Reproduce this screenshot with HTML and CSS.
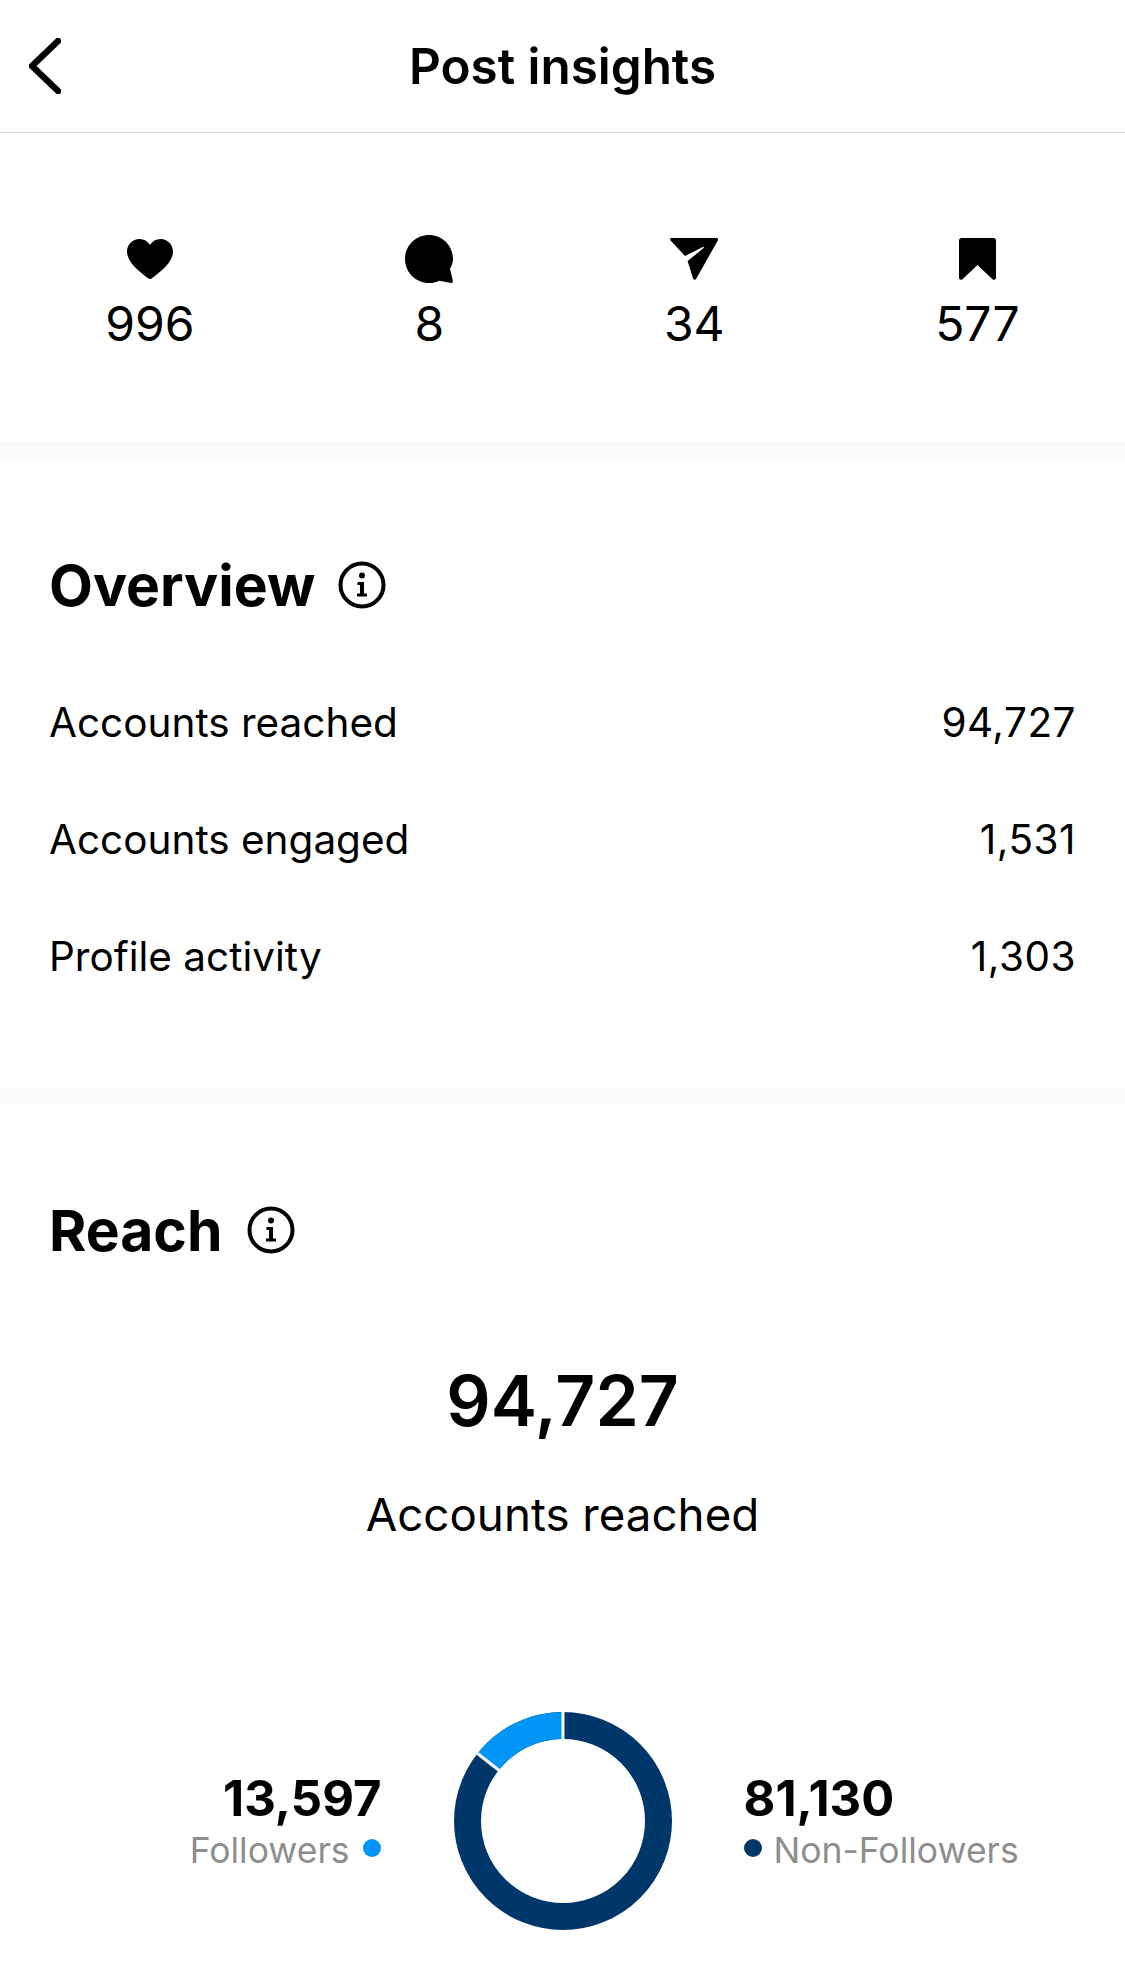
FILE: index.html
```html
<!DOCTYPE html>
<html>
<head>
  <meta charset="utf-8">
  <title>Post insights</title>
  <link rel="stylesheet" href="styles.css">
</head>
<body>

<div class="topbar">
  <svg class="back" width="32" height="56" viewBox="0 0 32 56"><path d="M29 3 L3 28 L29 53" /></svg>
  <div class="title">Post insights</div>
</div>

<div class="stats">
  <div class="stat">
    <div class="icon"><svg width="46" height="40" viewBox="0 0 46 40"><path d="M33.500 0C28.900 0 25.500 2.300 23 5.800 20.500 2.300 17.100 0 12.500 0 5.400 0 0 5.700 0 12.600 0 22.700 10.500 31 21 39.300c1.200 .9 2.800 .9 4 0C35.500 31 46 22.700 46 12.600 46 5.700 40.600 0 33.500 0Z"/></svg></div>
    <span>996</span>
  </div>
  <div class="stat">
    <div class="icon"><svg width="48" height="48" viewBox="0 0 48 48"><path d="M24 0C10.700 0 0 10.700 0 24s10.700 24 24 24c3.700 0 7.200 -.8 10.300 -2.300l11.800 2.200c1.200 .2 2.100 -.8 1.800 -2l-2.900 -12.100C46.900 30.700 48 27.500 48 24 48 10.700 37.300 0 24 0Z"/></svg></div>
    <span>8</span>
  </div>
  <div class="stat">
    <div class="icon"><svg width="48" height="42" viewBox="0 0 48 42"><path fill-rule="evenodd" d="M1.500 0H46.500C47.800 0 48.400 1.300 47.800 2.400L26.200 40.800C25.400 42.300 23.400 42 23 40.300L17.600 23 34 9.800 33.300 8.700 15 18 .6 2.600C-.4 1.500 .2 0 1.500 0Z"/></svg></div>
    <span>34</span>
  </div>
  <div class="stat">
    <div class="icon"><svg width="37" height="42" viewBox="0 0 37 42"><path d="M2.500 0H34.500C35.900 0 37 1.100 37 2.500V39.500C37 41.500 35 42.400 33.500 41.200L18.500 27 3.500 41.200C2 42.400 0 41.500 0 39.500V2.500C0 1.100 1.100 0 2.500 0Z"/></svg></div>
    <span>577</span>
  </div>
</div>

<div class="overview">
  <div class="heading">
    <h2>Overview</h2>
    <svg class="info" width="48" height="48" viewBox="0 0 48 48">
      <circle cx="24" cy="24" r="21.500" fill="none" stroke="#000" stroke-width="4"/>
      <circle cx="24" cy="14.500" r="3"/>
      <path d="M19.500 21H26V32.500H29V35.500H19V32.500H22V24H19.500Z"/>
    </svg>
  </div>
  <div class="row"><span>Accounts reached</span><span class="value">94,727</span></div>
  <div class="row"><span>Accounts engaged</span><span class="value">1,531</span></div>
  <div class="row"><span>Profile activity</span><span class="value">1,303</span></div>
</div>

<div class="reach">
  <div class="heading">
    <h2>Reach</h2>
    <svg class="info" width="48" height="48" viewBox="0 0 48 48">
      <circle cx="24" cy="24" r="21.500" fill="none" stroke="#000" stroke-width="4"/>
      <circle cx="24" cy="14.500" r="3"/>
      <path d="M19.500 21H26V32.500H29V35.500H19V32.500H22V24H19.500Z"/>
    </svg>
  </div>

  <div class="total">94,727</div>
  <div class="total-label">Accounts reached</div>

  <div class="split">
    <div class="side left">
      <div class="num">13,597</div>
      <div class="legend">Followers <i class="dot light"></i></div>
    </div>
    <svg class="donut" width="218" height="218" viewBox="0 0 218 218">
      <circle cx="109" cy="109" r="95.500" fill="none" stroke="#00376b" stroke-width="27"/>
      <circle cx="109" cy="109" r="95.500" fill="none" stroke="#0095f6" stroke-width="27" pathLength="100" stroke-dasharray="14.350 85.650" transform="rotate(-141.700 109 109)"/>
      <path d="M109 -1V29" stroke="#fff" stroke-width="3"/>
      <path d="M23.500 41.500 L46.500 59.500" stroke="#fff" stroke-width="3"/>
    </svg>
    <div class="side right">
      <div class="num">81,130</div>
      <div class="legend"><i class="dot dark"></i> Non-Followers</div>
    </div>
  </div>
</div>

</body>
</html>
```

FILE: styles.css
```css
body {
  margin: 0;
  background: #fff;
  color: #000;
  font-family: "Inter", "Liberation Sans", sans-serif;
}

.topbar {
  height: 132px;
  border-bottom: 1px solid #dbdbdb;
  display: flex;
  align-items: center;
  justify-content: center;
  position: relative;
}

.back {
  position: absolute;
  left: 29px;
  top: 38px;
}

.back path {
  fill: none;
  stroke: #000;
  stroke-width: 6.500;
  stroke-linecap: round;
  stroke-linejoin: round;
}

.title {
  font-size: 49.400px;
  font-weight: 600;
}

.stats {
  height: 327px;
  box-sizing: border-box;
  padding-top: 102px;
  display: flex;
  justify-content: space-around;
  border-bottom: 18px solid #fafafa;
}

.stat {
  display: flex;
  flex-direction: column;
  align-items: center;
  gap: 17px;
  font-size: 48px;
  line-height: 48px;
}

.icon {
  height: 48px;
  display: flex;
  align-items: center;
}

.overview {
  padding: 93px 49px 106px;
  border-bottom: 18px solid #fafafa;
}

.reach {
  padding: 93px 49px 0;
}

.heading {
  display: flex;
  align-items: center;
  gap: 23px;
  height: 64px;
}

.reach .heading {
  gap: 25px;
}

.heading h2 {
  margin: 0;
  font-size: 57px;
  font-weight: 700;
}

.row {
  display: flex;
  justify-content: space-between;
  font-size: 40.500px;
  line-height: 48px;
  margin-top: 69px;
}

.heading + .row {
  margin-top: 82px;
}

.value {
  letter-spacing: 0.500px;
}

.total {
  margin-top: 97px;
  text-align: center;
  font-size: 69.500px;
  line-height: 84px;
  font-weight: 600;
}

.total-label {
  margin-top: 44px;
  text-align: center;
  font-size: 45.700px;
  line-height: 56px;
}

.split {
  margin: 169px -49px 0;
  display: grid;
  grid-template-columns: 1fr 218px 1fr;
  column-gap: 72px;
  align-items: center;
}

.side {
  padding-top: 4px;
}

.side.left {
  text-align: right;
}

.num {
  font-size: 49px;
  line-height: 52px;
  font-weight: 700;
}

.legend {
  margin-top: 4px;
  font-size: 35.500px;
  line-height: 44px;
  color: #8e8e8e;
}

.left .legend {
  padding-right: 1px;
}

.dot {
  display: inline-block;
  width: 18px;
  height: 18px;
  border-radius: 50%;
  vertical-align: 6px;
}

.left .dot {
  margin-left: 3px;
}

.right .dot {
  margin-right: 2px;
}

.light {
  background: #0095f6;
}

.dark {
  background: #00376b;
}
```
